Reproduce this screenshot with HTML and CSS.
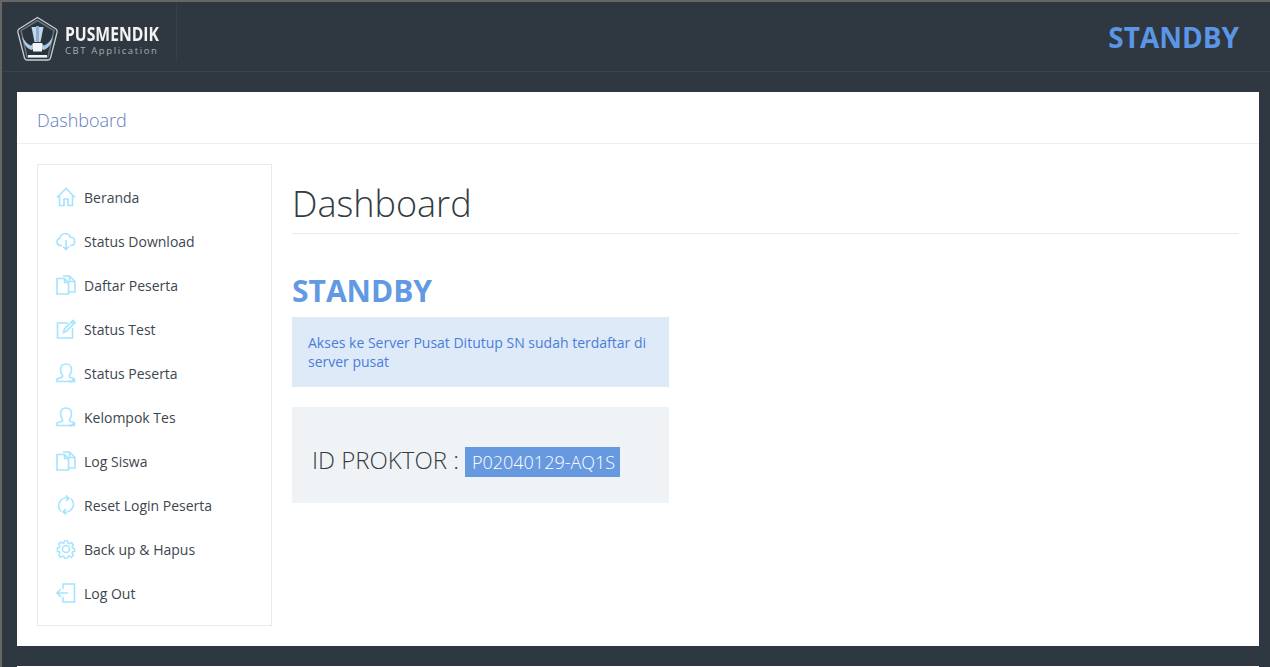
FILE: index.html
```html
<!DOCTYPE html>
<html lang="en">
<head>
    <meta charset="UTF-8">
    <meta name="viewport" content="width=device-width, initial-scale=1.0">
    <title>Dashboard</title>
    <link rel="stylesheet" href="styles.css">
</head>
<body>
    <svg class="icon-defs" width="0" height="0">
        <symbol id="i-home" viewBox="0 0 20 20"><path d="M1 10.500 10 1.500l9 9M3.500 8.500v10h4.500v-6.500h4v6.500h4.500v-10"/></symbol>
        <symbol id="i-cloud" viewBox="0 0 20 20"><path d="M6 14.500H4.500a3.700 3.700 0 0 1-.6-7.300 5.500 5.500 0 0 1 10.500-1 4.200 4.200 0 0 1 1 8.300H14M10 9v9.500M7 15.500l3 3 3-3"/></symbol>
        <symbol id="i-file" viewBox="0 0 20 20"><path d="M1 3.500h7.500l4 4v11.500H1zM8.500 3.500v4h4M7 1h6.500l5.500 5.500V17h-6.500M13.500 1v5.500H19"/></symbol>
        <symbol id="i-edit" viewBox="0 0 20 20"><path d="M12 4H1.500v15h15V9M7.500 13.500l1-3.500L17 1.500l2 2-8.500 8.500zM15.500 3l2 2"/></symbol>
        <symbol id="i-user" viewBox="0 0 20 20"><path d="M6.500 12.500C5 10.500 4.500 8.500 4.500 6.500 4.500 3 7 1 10 1s5.500 2 5.500 5.500c0 2-.5 4-2 6v1.500l5 2v2.500H1v-2.500l5.500-2zM13 17.500l2 1.500 2.500-2.500"/></symbol>
        <symbol id="i-sync" viewBox="0 0 20 20"><path d="M13 3.200A8 8 0 0 0 5 16.500M7 16.800A8 8 0 0 0 15 3.500M10 .5l3 2.700-3 2.800M10 14l-3 2.800 3 2.700"/></symbol>
        <symbol id="i-gear" viewBox="0 0 20 20"><circle cx="10" cy="10" r="3.500"/><path d="M8.300 1h3.400l.5 2.600 1.700.7 2.200-1.500 2.100 2.400-1.500 2.100.7 1.700 2.100.4v3.200l-2.100.4-.7 1.700 1.500 2.100-2.100 2.400-2.200-1.500-1.700.7-.5 2.100H8.300l-.5-2.100-1.700-.7-2.200 1.500-2.100-2.400 1.500-2.100-.7-1.700-2.100-.4V8.800l2.100-.4.700-1.700-1.500-2.100 2.100-2.400 2.200 1.500 1.700-.7z" transform="translate(1 1) scale(.9)"/></symbol>
        <symbol id="i-logout" viewBox="0 0 20 20"><path d="M7 6V1h11.500v18H7v-5M1 10h11M5 6l-4 4 4 4"/></symbol>
    </svg>

    <header class="topbar">
        <a class="brand" href="#">
            <svg class="brand-logo" viewBox="0 0 42 45" width="42" height="45">
                <path d="M20.500 1.500 39 13q1.500 1 1 3.500L33.500 42q-.5 2-2.500 2H10q-2 0-2.500-2L1 16.500q-.5-2.500 1-3.500z" fill="#2b343c" stroke="#c9ced3" stroke-width="1.300"/>
                <path d="M20.500 4.500 37 14.500 31 41H10L4 14.500z" fill="none" stroke="#67737e" stroke-width="1.500"/>
                <path d="M14.500 11h12l-3 15h-6z" fill="#c4d6e9"/>
                <path d="M19 10h3v16h-3z" fill="#8fb0d2"/>
                <path d="M5 20c1 7 4 12 9 14l3-1-1-6c-1 2-2 3-3 2-3-1-6-5-8-9zM36 20c-1 7-4 12-9 14l-3-1 1-6c1 2 2 3 3 2 3-1 6-5 8-9z" fill="#a9c8e8"/>
                <path d="M16 27h9v8.500h-9z" fill="#f1f5fa"/>
                <path d="M11 39h19v2.500H11z" fill="#eef3f8"/>
            </svg>
            <span class="brand-text">
                <span class="brand-name">PUSMENDIK</span>
                <span class="brand-sub">CBT Application</span>
            </span>
        </a>
        <div class="topbar-status">STANDBY</div>
    </header>

    <div class="page">
        <div class="breadcrumb">Dashboard</div>
        <div class="page-body">
            <nav class="sidebar">
                <a href="#"><svg class="icon"><use href="#i-home"/></svg>Beranda</a>
                <a href="#"><svg class="icon"><use href="#i-cloud"/></svg>Status Download</a>
                <a href="#"><svg class="icon"><use href="#i-file"/></svg>Daftar Peserta</a>
                <a href="#"><svg class="icon"><use href="#i-edit"/></svg>Status Test</a>
                <a href="#"><svg class="icon"><use href="#i-user"/></svg>Status Peserta</a>
                <a href="#"><svg class="icon"><use href="#i-user"/></svg>Kelompok Tes</a>
                <a href="#"><svg class="icon"><use href="#i-file"/></svg>Log Siswa</a>
                <a href="#"><svg class="icon"><use href="#i-sync"/></svg>Reset Login Peserta</a>
                <a href="#"><svg class="icon"><use href="#i-gear"/></svg>Back up &amp; Hapus</a>
                <a href="#"><svg class="icon"><use href="#i-logout"/></svg>Log Out</a>
            </nav>
            <main class="content">
                <h1 class="page-title">Dashboard</h1>
                <div class="status-col">
                    <h2 class="status-title">STANDBY</h2>
                    <div class="alert">Akses ke Server Pusat Ditutup SN sudah terdaftar di server pusat</div>
                    <div class="proktor">
                        <span class="proktor-label">ID PROKTOR :</span>
                        <span class="proktor-id">P02040129-AQ1S</span>
                    </div>
                </div>
            </main>
        </div>
    </div>

    <footer class="footer"></footer>
</body>
</html>
```

FILE: styles.css
```css
* {
    box-sizing: border-box;
}

html, body {
    height: 667px;
    overflow: hidden;
}

body {
    margin: 0;
    background-color: #2f3740;
    border-top: 2px solid #666;
    border-left: 2px solid #666;
    font-family: "Open Sans", Arial, sans-serif;
    font-size: 14px;
    color: #333;
}

a {
    text-decoration: none;
    color: inherit;
}

.icon-defs {
    display: block;
    height: 0;
}

.topbar {
    display: flex;
    justify-content: space-between;
    align-items: center;
    height: 70px;
    border-bottom: 1px solid #3a434c;
}

.brand {
    display: flex;
    align-items: flex-start;
    gap: 6px;
    width: 175px;
    height: 60px;
    padding: 14px 0 0 15px;
    border-right: 1px solid #38414a;
    align-self: flex-start;
}

.brand-logo {
    flex: none;
    filter: blur(.4px);
}

.brand-text {
    display: flex;
    flex-direction: column;
    width: 94px;
    margin-top: 7px;
}

.brand-name {
    color: #f4f4f4;
    font-size: 20px;
    font-weight: 700;
    line-height: 22px;
    transform: scaleX(.785);
    transform-origin: left;
    white-space: nowrap;
}

.brand-sub {
    color: #a9adb1;
    font-size: 9.500px;
    line-height: 12px;
    letter-spacing: 1.600px;
    white-space: nowrap;
}

.topbar-status {
    padding-right: 31px;
    color: #5b95e6;
    font-size: 28px;
    font-weight: 700;
}

.page {
    height: 554px;
    margin: 20px 11px 0 15px;
    background-color: #fff;
}

.breadcrumb {
    height: 52px;
    padding: 0 20px;
    border-bottom: 1px solid #eceef1;
    color: #5f7cc0;
    font-size: 18px;
    font-weight: 300;
    line-height: 56px;
}

.page-body {
    display: flex;
    gap: 20px;
    padding: 20px;
}

.sidebar {
    flex: none;
    width: 235px;
    height: 462px;
    padding: 10px 0 0;
    border: 1px solid #e7ebef;
}

.sidebar a {
    display: flex;
    align-items: center;
    gap: 8px;
    height: 44px;
    padding-left: 18px;
    color: #3d4650;
    font-size: 14px;
}

.icon {
    flex: none;
    width: 20px;
    height: 20px;
    fill: none;
    stroke: #a5e4ff;
    stroke-width: 1.600;
}

.content {
    flex: 1;
}

.page-title {
    margin: 0;
    padding: 15px 0 0;
    height: 70px;
    border-bottom: 1px solid #e7ebef;
    color: #333b43;
    font-size: 36px;
    font-weight: 300;
    line-height: 50px;
}

.status-col {
    width: 377px;
}

.status-title {
    margin: 37px 0 0;
    color: #6299e3;
    font-size: 30px;
    font-weight: 700;
    line-height: 40px;
}

.alert {
    height: 70px;
    margin-top: 6px;
    padding: 16px 16px 0;
    background-color: #deeaf8;
    color: #4a7ddb;
    line-height: 19px;
}

.proktor {
    display: flex;
    align-items: flex-start;
    gap: 6px;
    height: 96px;
    margin-top: 20px;
    padding: 40px 20px 0;
    background-color: #f0f3f6;
}

.proktor-label {
    color: #333b43;
    font-size: 24px;
    font-weight: 300;
    line-height: 26px;
}

.proktor-id {
    width: 155px;
    height: 30px;
    padding-left: 7px;
    background-color: #6699e0;
    color: #fff;
    font-size: 18px;
    font-weight: 300;
    line-height: 30px;
}

.footer {
    height: 10px;
    margin: 20px 11px 0 15px;
    background-color: #fff;
}
```
